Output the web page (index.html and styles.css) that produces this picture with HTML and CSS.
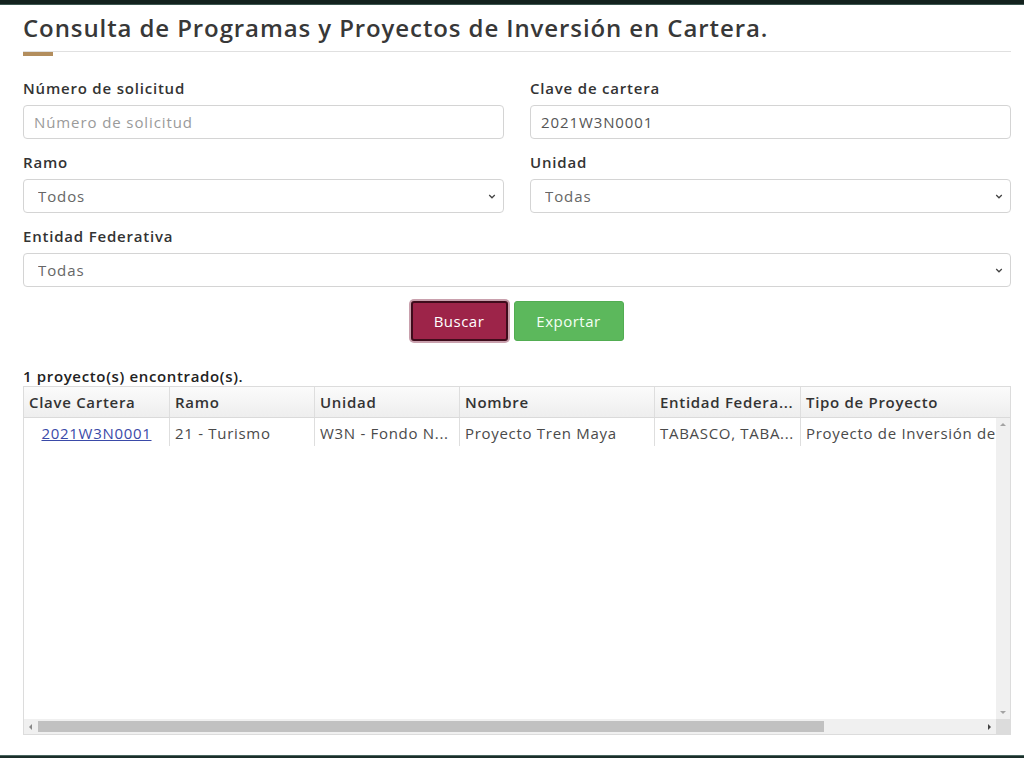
FILE: index.html
```html
<!DOCTYPE html>
<html lang="es">
<head>
<meta charset="utf-8">
<title>Consulta de Programas y Proyectos de Inversión en Cartera</title>
<link rel="stylesheet" href="styles.css">
</head>
<body>
<div class="topbar"></div>
<main class="page">
  <h1 class="title">Consulta de Programas y Proyectos de Inversión en Cartera.</h1>
  <div class="rule"><span class="rule-accent"></span></div>

  <form class="form">
    <div class="field">
      <label class="label">Número de solicitud</label>
      <input class="control" type="text" placeholder="Número de solicitud">
    </div>
    <div class="field">
      <label class="label">Clave de cartera</label>
      <input class="control" type="text" value="2021W3N0001">
    </div>
    <div class="field">
      <label class="label">Ramo</label>
      <select class="control select"><option>Todos</option></select>
    </div>
    <div class="field">
      <label class="label">Unidad</label>
      <select class="control select"><option>Todas</option></select>
    </div>
    <div class="field field-wide">
      <label class="label">Entidad Federativa</label>
      <select class="control select"><option>Todas</option></select>
    </div>
  </form>

  <div class="actions">
    <button class="btn btn-primary" type="button">Buscar</button>
    <button class="btn btn-success" type="button">Exportar</button>
  </div>

  <p class="count">1 proyecto(s) encontrado(s).</p>

  <div class="grid">
    <div class="grid-head">
      <div class="cell c1">Clave Cartera</div>
      <div class="cell c2">Ramo</div>
      <div class="cell c3">Unidad</div>
      <div class="cell c4">Nombre</div>
      <div class="cell c5">Entidad Federa...</div>
      <div class="cell c6">Tipo de Proyecto</div>
    </div>
    <div class="grid-main">
      <div class="grid-body">
        <div class="row">
          <div class="cell c1 center"><a href="#" class="link">2021W3N0001</a></div>
          <div class="cell c2">21 - Turismo</div>
          <div class="cell c3">W3N - Fondo N...</div>
          <div class="cell c4">Proyecto Tren Maya</div>
          <div class="cell c5">TABASCO, TABA...</div>
          <div class="cell c6">Proyecto de Inversión de</div>
        </div>
      </div>
      <div class="vscroll">
        <span class="arrow-up"></span>
        <span class="arrow-down"></span>
      </div>
    </div>
    <div class="hscroll">
      <span class="arrow-left"></span>
      <div class="htrack"><div class="hthumb"></div></div>
      <span class="arrow-right"></span>
      <span class="corner"></span>
    </div>
  </div>
</main>
<div class="bottombar"></div>
</body>
</html>
```

FILE: styles.css
```css
* { box-sizing: border-box; }

html, body {
  margin: 0;
  padding: 0;
  background: #ffffff;
}

body {
  font-family: "Open Sans", "Noto Sans", "DejaVu Sans", sans-serif;
  color: #333333;
  height: 758px;
  overflow: hidden;
  position: relative;
  letter-spacing: 0.7px;
}

.topbar {
  height: 5px;
  background: #13221e;
  border-bottom: 1px solid #3c5650;
}

.bottombar {
  position: absolute;
  left: 0;
  right: 0;
  bottom: 0;
  height: 3px;
  background: #1b2f2a;
  border-top: 1px solid #4a6660;
}

.page {
  width: 988px;
  margin-left: 23px;
}

.title {
  margin: 0;
  padding-top: 6px;
  font-size: 24px;
  line-height: 34px;
  font-weight: 600;
  color: #383838;
  letter-spacing: 0.9px;
}

.rule {
  margin-top: 6px;
  border-top: 1px solid #e0e0e0;
  height: 5px;
}

.rule-accent {
  display: block;
  width: 30px;
  height: 4px;
  background: #b38e5d;
}

.form {
  margin-top: 22px;
  display: grid;
  grid-template-columns: 1fr 1fr;
  column-gap: 26px;
  row-gap: 13px;
}

.field-wide { grid-column: 1 / -1; }

.label {
  display: block;
  font-size: 15px;
  line-height: 21px;
  font-weight: 600;
  color: #333333;
  margin-bottom: 6px;
  letter-spacing: 0.8px;
}

.control {
  display: block;
  width: 100%;
  height: 34px;
  border: 1px solid #d4d4d4;
  border-radius: 4px;
  background: #ffffff;
  font-family: inherit;
  font-size: 15px;
  letter-spacing: 0.9px;
  color: #555555;
  padding: 0 10px;
}

.control::placeholder { color: #9a9a9a; }

.select {
  appearance: none;
  -webkit-appearance: none;
  padding-left: 14px;
  color: #666666;
  background-image: url("data:image/svg+xml,%3Csvg xmlns='http://www.w3.org/2000/svg' width='10' height='6' viewBox='0 0 10 6'%3E%3Cpath d='M1.5 1.2 L5 4.6 L8.5 1.2' fill='none' stroke='%23444' stroke-width='1.6'/%3E%3C/svg%3E");
  background-repeat: no-repeat;
  background-position: right 7px center;
  background-size: 8px 5px;
}

.actions {
  display: flex;
  justify-content: center;
  gap: 6px;
  margin-top: 14px;
}

.btn {
  height: 40px;
  border-radius: 3px;
  font-family: inherit;
  font-size: 15px;
  letter-spacing: 0.5px;
  color: #ffffff;
  padding: 0 10px;
  cursor: pointer;
}

.btn-primary {
  width: 97px;
  background: #9d2449;
  border: 2px solid #3f0c1c;
  box-shadow: 0 0 0 2px #c9a0ad;
}

.btn-success {
  width: 110px;
  background: #5cb85c;
  border: 1px solid #52ad52;
  color: #f4fff4;
}

.count {
  margin: 25px 0 0;
  font-size: 15px;
  line-height: 20px;
  font-weight: 600;
  color: #222222;
  letter-spacing: 0.65px;
}

.grid {
  margin-top: 0;
  width: 988px;
  height: 349px;
  border: 1px solid #dcdcdc;
  display: flex;
  flex-direction: column;
  overflow: hidden;
}

.grid-head {
  display: flex;
  height: 31px;
  flex: none;
  background: linear-gradient(#fbfbfb, #eeeeee);
  border-bottom: 1px solid #dadada;
  overflow: hidden;
}

.cell {
  flex: none;
  padding: 0 5px;
  white-space: nowrap;
  overflow: hidden;
  font-size: 15px;
  border-right: 1px solid #dedede;
}

.grid-head .cell {
  line-height: 30px;
  font-weight: 600;
  color: #333333;
}

.c1 { width: 146px; }
.c2 { width: 145px; }
.c3 { width: 145px; }
.c4 { width: 195px; }
.c5 { width: 146px; }
.c6 { width: 260px; }

.center { text-align: center; }

.grid-main {
  flex: 1;
  display: flex;
  min-height: 0;
}

.grid-body {
  flex: 1;
  overflow: hidden;
  min-width: 0;
}

.row {
  display: flex;
  height: 28px;
}

.row .cell {
  line-height: 30px;
  color: #4a4a4a;
}

.link {
  color: #3a4aa8;
  text-decoration: underline;
}

.vscroll {
  flex: none;
  width: 14px;
  background: #f0f0f0;
  display: flex;
  flex-direction: column;
  justify-content: space-between;
  align-items: center;
  padding: 5px 0;
}

.arrow-up, .arrow-down, .arrow-left, .arrow-right {
  display: block;
  width: 0;
  height: 0;
}

.arrow-up {
  border-left: 3px solid transparent;
  border-right: 3px solid transparent;
  border-bottom: 3px solid #a3a3a3;
}

.arrow-down {
  border-left: 3px solid transparent;
  border-right: 3px solid transparent;
  border-top: 3px solid #a3a3a3;
}

.hscroll {
  flex: none;
  height: 15px;
  display: flex;
  align-items: center;
  background: #f0f0f0;
}

.arrow-left {
  margin: 0 6px 0 5px;
  border-top: 3px solid transparent;
  border-bottom: 3px solid transparent;
  border-right: 3px solid #8a8a8a;
}

.htrack {
  flex: 1;
  height: 100%;
  padding: 2px 0;
}

.hthumb {
  width: 786px;
  height: 100%;
  background: #c1c1c1;
}

.arrow-right {
  margin: 0 5px 0 6px;
  border-top: 3px solid transparent;
  border-bottom: 3px solid transparent;
  border-left: 3px solid #444444;
}

.corner {
  width: 14px;
  height: 100%;
  background: #dcdcdc;
}
```
